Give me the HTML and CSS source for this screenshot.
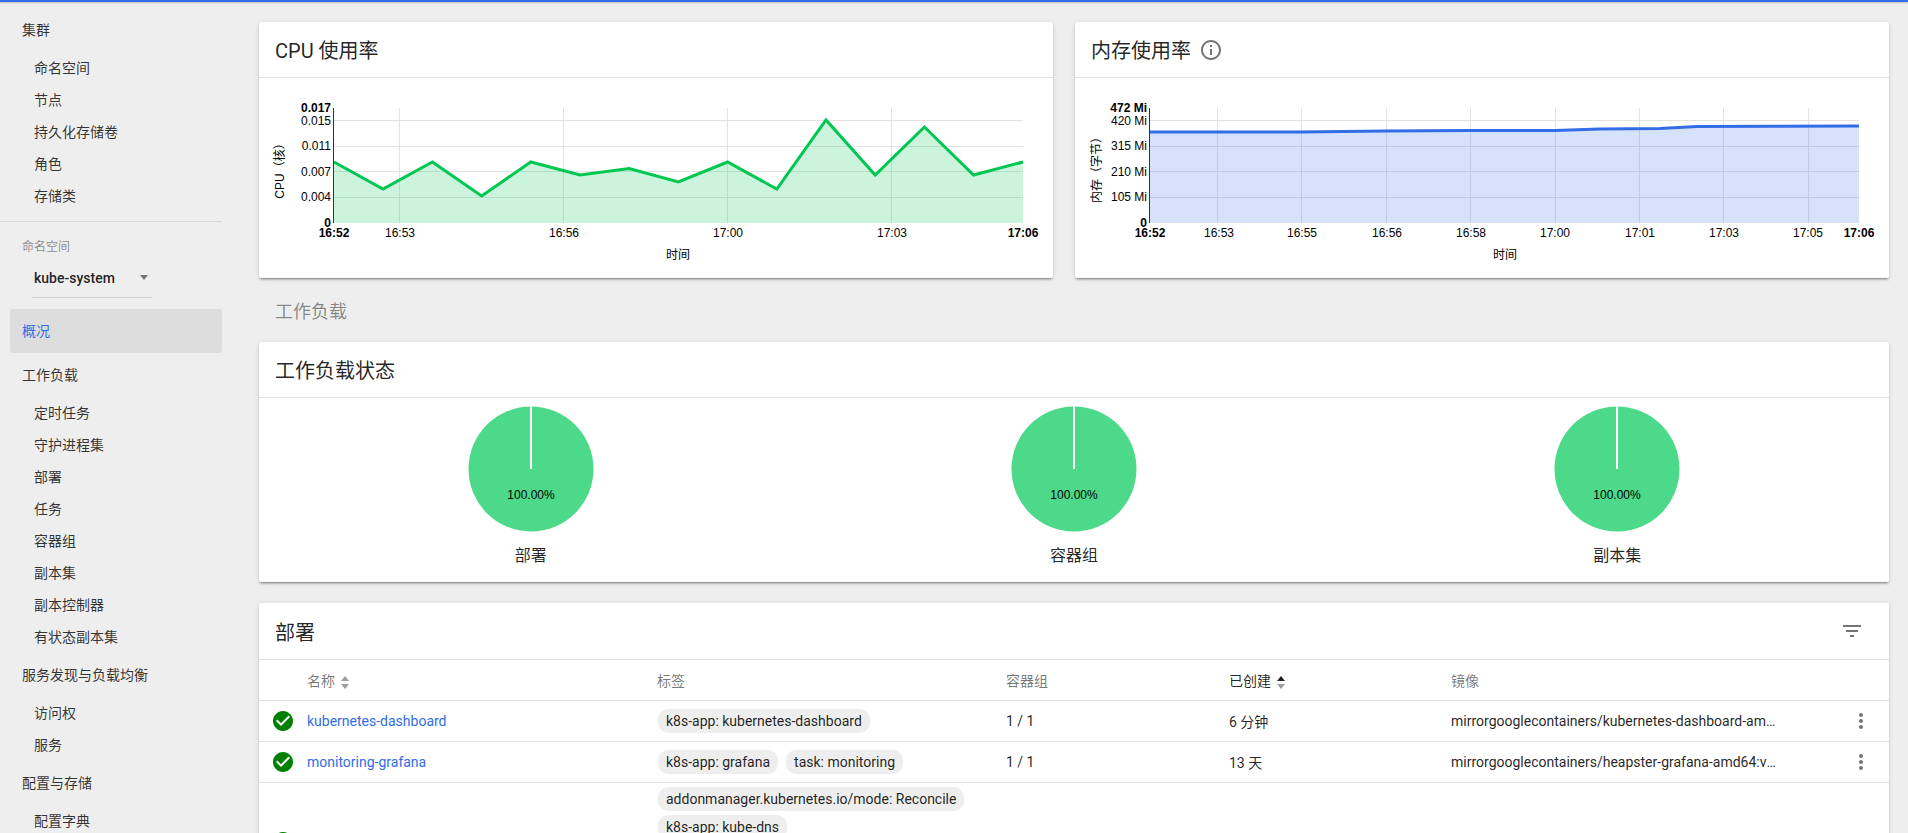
FILE: index.html
```html
<!DOCTYPE html>
<html lang="zh-CN">
<head>
    <meta charset="UTF-8">
    <meta name="viewport" content="width=device-width, initial-scale=1.0">
    <title>概况 - Kubernetes Dashboard</title>
    <link rel="stylesheet" href="styles.css">
</head>
<body>
    <div class="topbar"></div>
    <div class="layout">
        <nav class="sidebar">
            <a class="nav-head">集群</a>
            <a class="nav-item">命名空间</a>
            <a class="nav-item">节点</a>
            <a class="nav-item">持久化存储卷</a>
            <a class="nav-item">角色</a>
            <a class="nav-item">存储类</a>
            <div class="nav-divider"></div>
            <div class="ns-label">命名空间</div>
            <div class="ns-select">
                <span>kube-system</span>
                <span class="ns-arrow"></span>
            </div>
            <a class="nav-head active">概况</a>
            <a class="nav-head">工作负载</a>
            <a class="nav-item">定时任务</a>
            <a class="nav-item">守护进程集</a>
            <a class="nav-item">部署</a>
            <a class="nav-item">任务</a>
            <a class="nav-item">容器组</a>
            <a class="nav-item">副本集</a>
            <a class="nav-item">副本控制器</a>
            <a class="nav-item">有状态副本集</a>
            <a class="nav-head">服务发现与负载均衡</a>
            <a class="nav-item">访问权</a>
            <a class="nav-item">服务</a>
            <a class="nav-head">配置与存储</a>
            <a class="nav-item">配置字典</a>
        </nav>

        <main class="content">
            <div class="charts">
                <section class="card">
                    <div class="card-header">CPU 使用率</div>
                    <svg class="chart" width="794" height="200" viewBox="259 78 794 200">
                        <g class="grid">
                            <path d="M334 120.5H1023M334 146.5H1023M334 171.5H1023M334 197.5H1023"/>
                            <path d="M399.5 108V223M563.5 108V223M727.5 108V223M891.5 108V223"/>
                        </g>
                        <polygon class="area-green" points="334,162 383,189 432.4,162 481.6,196 530.8,162 580,175 629.2,168.5 678.4,182 727.6,162 776.8,189 826,120 875.2,175 924.4,127 973.6,175 1023,162 1023,223 334,223"/>
                        <polyline class="line-green" points="334,162 383,189 432.4,162 481.6,196 530.8,162 580,175 629.2,168.5 678.4,182 727.6,162 776.8,189 826,120 875.2,175 924.4,127 973.6,175 1023,162"/>
                        <path class="axis" d="M333.5 108V223"/>
                        <g class="ticks-y">
                            <text class="bold" x="331" y="112">0.017</text>
                            <text x="331" y="125">0.015</text>
                            <text x="331" y="150">0.011</text>
                            <text x="331" y="176">0.007</text>
                            <text x="331" y="201">0.004</text>
                            <text class="bold" x="331" y="227">0</text>
                        </g>
                        <g class="ticks-x">
                            <text class="bold" x="334" y="237">16:52</text>
                            <text x="400" y="237">16:53</text>
                            <text x="564" y="237">16:56</text>
                            <text x="728" y="237">17:00</text>
                            <text x="892" y="237">17:03</text>
                            <text class="bold" x="1023" y="237">17:06</text>
                            <text x="678" y="259">时间</text>
                        </g>
                        <text class="axis-title" transform="translate(284 168) rotate(-90)">CPU（核）</text>
                    </svg>
                </section>

                <section class="card">
                    <div class="card-header">
                        内存使用率
                        <svg class="icon info-icon" width="24" height="24" viewBox="0 0 24 24"><path d="M11 17h2v-6h-2v6zm1-15C6.48 2 2 6.48 2 12s4.48 10 10 10 10-4.48 10-10S17.52 2 12 2zm0 18c-4.41 0-8-3.59-8-8s3.59-8 8-8 8 3.59 8 8-3.59 8-8 8zm-1-11h2V7h-2v2z"/></svg>
                    </div>
                    <svg class="chart" width="814" height="200" viewBox="1075 78 814 200">
                        <g class="grid">
                            <path d="M1150 120.5H1859M1150 146.5H1859M1150 171.5H1859M1150 197.5H1859"/>
                            <path d="M1217.5 108V223M1301.5 108V223M1386.5 108V223M1470.5 108V223M1555.5 108V223M1639.5 108V223M1723.5 108V223M1808.5 108V223"/>
                        </g>
                        <polygon class="area-blue" points="1150,132 1300,132 1386,131 1470,130.5 1555,130.5 1600,129 1660,128.5 1697,126.5 1859,126 1859,223 1150,223"/>
                        <polyline class="line-blue" points="1150,132 1300,132 1386,131 1470,130.5 1555,130.5 1600,129 1660,128.5 1697,126.5 1859,126"/>
                        <path class="axis" d="M1149.5 108V223"/>
                        <g class="ticks-y">
                            <text class="bold" x="1147" y="112">472 Mi</text>
                            <text x="1147" y="125">420 Mi</text>
                            <text x="1147" y="150">315 Mi</text>
                            <text x="1147" y="176">210 Mi</text>
                            <text x="1147" y="201">105 Mi</text>
                            <text class="bold" x="1147" y="227">0</text>
                        </g>
                        <g class="ticks-x">
                            <text class="bold" x="1150" y="237">16:52</text>
                            <text x="1219" y="237">16:53</text>
                            <text x="1302" y="237">16:55</text>
                            <text x="1387" y="237">16:56</text>
                            <text x="1471" y="237">16:58</text>
                            <text x="1555" y="237">17:00</text>
                            <text x="1640" y="237">17:01</text>
                            <text x="1724" y="237">17:03</text>
                            <text x="1808" y="237">17:05</text>
                            <text class="bold" x="1859" y="237">17:06</text>
                            <text x="1505" y="259">时间</text>
                        </g>
                        <text class="axis-title" transform="translate(1101 167) rotate(-90)">内存（字节）</text>
                    </svg>
                </section>
            </div>

            <h2 class="section-title">工作负载</h2>

            <section class="card">
                <div class="card-header">工作负载状态</div>
                <div class="pies">
                    <div class="pie-box">
                        <svg class="pie" width="126" height="126" viewBox="0 0 126 126">
                            <circle cx="63" cy="63" r="62.5"/>
                            <path d="M63 0V63"/>
                            <text x="63" y="93">100.00%</text>
                        </svg>
                        <div class="pie-label">部署</div>
                    </div>
                    <div class="pie-box">
                        <svg class="pie" width="126" height="126" viewBox="0 0 126 126">
                            <circle cx="63" cy="63" r="62.5"/>
                            <path d="M63 0V63"/>
                            <text x="63" y="93">100.00%</text>
                        </svg>
                        <div class="pie-label">容器组</div>
                    </div>
                    <div class="pie-box">
                        <svg class="pie" width="126" height="126" viewBox="0 0 126 126">
                            <circle cx="63" cy="63" r="62.5"/>
                            <path d="M63 0V63"/>
                            <text x="63" y="93">100.00%</text>
                        </svg>
                        <div class="pie-label">副本集</div>
                    </div>
                </div>
            </section>

            <section class="card card-table">
                <div class="card-header card-header-split">
                    部署
                    <svg class="icon" width="24" height="24" viewBox="0 0 24 24"><path d="M10 18h4v-2h-4v2zM3 6v2h18V6H3zm3 7h12v-2H6v2z"/></svg>
                </div>
                <table class="table">
                    <colgroup>
                        <col class="col-status">
                        <col class="col-name">
                        <col class="col-labels">
                        <col class="col-pods">
                        <col class="col-created">
                        <col class="col-image">
                        <col>
                    </colgroup>
                    <thead>
                        <tr>
                            <th></th>
                            <th>名称 <span class="sort"><i class="sort-up"></i><i class="sort-down"></i></span></th>
                            <th>标签</th>
                            <th>容器组</th>
                            <th class="sorted">已创建 <span class="sort"><i class="sort-up"></i><i class="sort-down"></i></span></th>
                            <th>镜像</th>
                            <th></th>
                        </tr>
                    </thead>
                    <tbody>
                        <tr>
                            <td><svg class="ok-icon" width="24" height="24" viewBox="0 0 24 24"><path d="M12 2C6.48 2 2 6.48 2 12s4.48 10 10 10 10-4.48 10-10S17.52 2 12 2zm-2 15l-5-5 1.41-1.41L10 14.17l7.59-7.59L19 8l-9 9z"/></svg></td>
                            <td><a class="link">kubernetes-dashboard</a></td>
                            <td><div class="chips"><span class="chip">k8s-app: kubernetes-dashboard</span></div></td>
                            <td>1 / 1</td>
                            <td>6 分钟</td>
                            <td><div class="image-name">mirrorgooglecontainers/kubernetes-dashboard-amd64:v1.8.3</div></td>
                            <td><svg class="icon" width="24" height="24" viewBox="0 0 24 24"><path d="M12 8c1.1 0 2-.9 2-2s-.9-2-2-2-2 .9-2 2 .9 2 2 2zm0 2c-1.1 0-2 .9-2 2s.9 2 2 2 2-.9 2-2-.9-2-2-2zm0 6c-1.1 0-2 .9-2 2s.9 2 2 2 2-.9 2-2-.9-2-2-2z"/></svg></td>
                        </tr>
                        <tr>
                            <td><svg class="ok-icon" width="24" height="24" viewBox="0 0 24 24"><path d="M12 2C6.48 2 2 6.48 2 12s4.48 10 10 10 10-4.48 10-10S17.52 2 12 2zm-2 15l-5-5 1.41-1.41L10 14.17l7.59-7.59L19 8l-9 9z"/></svg></td>
                            <td><a class="link">monitoring-grafana</a></td>
                            <td><div class="chips"><span class="chip">k8s-app: grafana</span><span class="chip">task: monitoring</span></div></td>
                            <td>1 / 1</td>
                            <td>13 天</td>
                            <td><div class="image-name">mirrorgooglecontainers/heapster-grafana-amd64:v4.4.3</div></td>
                            <td><svg class="icon" width="24" height="24" viewBox="0 0 24 24"><path d="M12 8c1.1 0 2-.9 2-2s-.9-2-2-2-2 .9-2 2 .9 2 2 2zm0 2c-1.1 0-2 .9-2 2s.9 2 2 2 2-.9 2-2-.9-2-2-2zm0 6c-1.1 0-2 .9-2 2s.9 2 2 2 2-.9 2-2-.9-2-2-2z"/></svg></td>
                        </tr>
                        <tr class="row-tall">
                            <td><svg class="ok-icon" width="24" height="24" viewBox="0 0 24 24"><path d="M12 2C6.48 2 2 6.48 2 12s4.48 10 10 10 10-4.48 10-10S17.52 2 12 2zm-2 15l-5-5 1.41-1.41L10 14.17l7.59-7.59L19 8l-9 9z"/></svg></td>
                            <td></td>
                            <td class="cell-top"><div class="chips chips-stack"><span class="chip">addonmanager.kubernetes.io/mode: Reconcile</span><span class="chip">k8s-app: kube-dns</span></div></td>
                            <td></td>
                            <td></td>
                            <td></td>
                            <td></td>
                        </tr>
                    </tbody>
                </table>
            </section>
        </main>
    </div>
</body>
</html>
```

FILE: styles.css
```css
* {
    box-sizing: border-box;
}

html, body {
    height: 833px;
    margin: 0;
    overflow: hidden;
}

body {
    background-color: #eee;
    color: rgba(0, 0, 0, 0.87);
    font-family: Roboto, "Noto Sans CJK SC", sans-serif;
    font-size: 14px;
}

.topbar {
    height: 2px;
    background-color: #326de6;
    box-shadow: 0 1px 2px rgba(0, 0, 0, 0.2);
}

.layout {
    display: flex;
}

/* sidebar */
.sidebar {
    flex: 0 0 222px;
    padding-top: 6px;
}

.nav-head,
.nav-item {
    display: block;
    white-space: nowrap;
    color: rgba(0, 0, 0, 0.8);
}

.nav-head {
    height: 44px;
    line-height: 44px;
    padding-left: 22px;
}

.nav-head.active {
    margin-left: 10px;
    padding-left: 12px;
    background-color: #ddd;
    border-radius: 2px;
    color: #326de6;
}

.nav-item {
    height: 32px;
    line-height: 32px;
    padding-left: 34px;
}

.nav-divider {
    height: 1px;
    margin-top: 9px;
    background-color: #d6d6d6;
}

.ns-label {
    margin-top: 16px;
    padding-left: 22px;
    font-size: 12px;
    line-height: 18px;
    color: rgba(0, 0, 0, 0.45);
}

.ns-select {
    display: flex;
    justify-content: space-between;
    align-items: center;
    width: 120px;
    height: 40px;
    margin: 2px 0 11px 32px;
    padding: 0 3px 0 2px;
    border-bottom: 1px solid #d0d0d0;
    font-weight: 500;
}

.ns-arrow {
    width: 0;
    height: 0;
    margin-right: 1px;
    border-left: 4.5px solid transparent;
    border-right: 4.5px solid transparent;
    border-top: 5px solid #757575;
}

/* main column */
.content {
    flex: 1;
    min-width: 0;
    padding: 20px 19px 0 37px;
}

.charts {
    display: grid;
    grid-template-columns: 794px 814px;
    gap: 22px;
}

.card {
    background-color: #fff;
    border-radius: 2px;
    box-shadow: 0 2px 2px 0 rgba(0, 0, 0, 0.14), 0 3px 1px -2px rgba(0, 0, 0, 0.2), 0 1px 5px 0 rgba(0, 0, 0, 0.12);
}

.card-header {
    display: flex;
    align-items: center;
    height: 56px;
    padding: 0 16px;
    border-bottom: 1px solid #e0e0e0;
    font-size: 20px;
}

.card-header-split {
    justify-content: space-between;
    height: 57px;
    padding-right: 25px;
}

.info-icon {
    margin-left: 8px;
}

.icon {
    display: block;
    fill: #757575;
}

.section-title {
    height: 64px;
    margin: 0;
    padding-left: 16px;
    font-size: 18px;
    font-weight: 400;
    line-height: 68px;
    color: rgba(0, 0, 0, 0.45);
}

/* charts */
.chart {
    display: block;
}

.chart text {
    font-family: "Liberation Sans", "Noto Sans CJK SC", sans-serif;
    font-size: 12px;
    fill: #000;
}

.chart .bold {
    font-weight: 700;
}

.ticks-y text {
    text-anchor: end;
}

.ticks-x text,
.axis-title {
    text-anchor: middle;
}

.grid path {
    fill: none;
    stroke: #e3e3e3;
}

.axis {
    fill: none;
    stroke: #333;
}

.area-green {
    fill: rgba(0, 200, 83, 0.2);
}

.line-green {
    fill: none;
    stroke: #00c752;
    stroke-width: 3;
}

.area-blue {
    fill: rgba(50, 109, 230, 0.2);
}

.line-blue {
    fill: none;
    stroke: #326de6;
    stroke-width: 3;
}

/* pies */
.pies {
    display: grid;
    grid-template-columns: repeat(3, 1fr);
    height: 184px;
    padding-top: 8px;
}

.pie-box {
    display: flex;
    flex-direction: column;
    align-items: center;
}

.pie circle {
    fill: #4dd98a;
}

.pie path {
    fill: none;
    stroke: #fff;
    stroke-width: 2;
}

.pie text {
    font-family: "Liberation Sans", sans-serif;
    font-size: 12px;
    text-anchor: middle;
    fill: #000;
}

.pie-label {
    margin-top: 12px;
    font-size: 16px;
    line-height: 24px;
}

/* table */
.card-table {
    margin-top: 21px;
}

.table {
    width: 100%;
    table-layout: fixed;
    border-collapse: separate;
    border-spacing: 0;
}

.col-status { width: 48px; }
.col-name { width: 350px; }
.col-labels { width: 349px; }
.col-pods { width: 223px; }
.col-created { width: 222px; }
.col-image { width: 394px; }

.table th,
.table td {
    height: 41px;
    padding: 0;
    border-bottom: 1px solid #e0e0e0;
    text-align: left;
    vertical-align: middle;
    font-weight: 400;
}

.table th {
    color: rgba(0, 0, 0, 0.54);
}

.table th.sorted {
    color: rgba(0, 0, 0, 0.87);
}

.sort {
    display: inline-flex;
    flex-direction: column;
    gap: 3px;
    margin-left: 3px;
    vertical-align: middle;
}

.sort i {
    display: block;
    width: 0;
    height: 0;
    border-left: 4.5px solid transparent;
    border-right: 4.5px solid transparent;
}

.sort-up {
    border-bottom: 5px solid #9e9e9e;
}

.sort-down {
    border-top: 5px solid #9e9e9e;
}

.sorted .sort-up {
    border-bottom-color: #212121;
}

.ok-icon {
    display: block;
    margin-left: 12px;
    fill: #008000;
}

.table td .icon {
    margin-left: 3.5px;
}

.link {
    color: #326de6;
}

.chips {
    display: flex;
    flex-wrap: wrap;
    gap: 4px 8px;
    margin-left: 1px;
}

.chips-stack {
    flex-direction: column;
    align-items: flex-start;
    padding-top: 4px;
}

.chip {
    height: 24px;
    padding: 0 8px;
    border-radius: 10px;
    background-color: #eee;
    line-height: 24px;
    white-space: nowrap;
}

.image-name {
    width: 331px;
    overflow: hidden;
    white-space: nowrap;
    text-overflow: ellipsis;
}

.row-tall td {
    height: 118px;
}

.table td.cell-top {
    vertical-align: top;
}
```
